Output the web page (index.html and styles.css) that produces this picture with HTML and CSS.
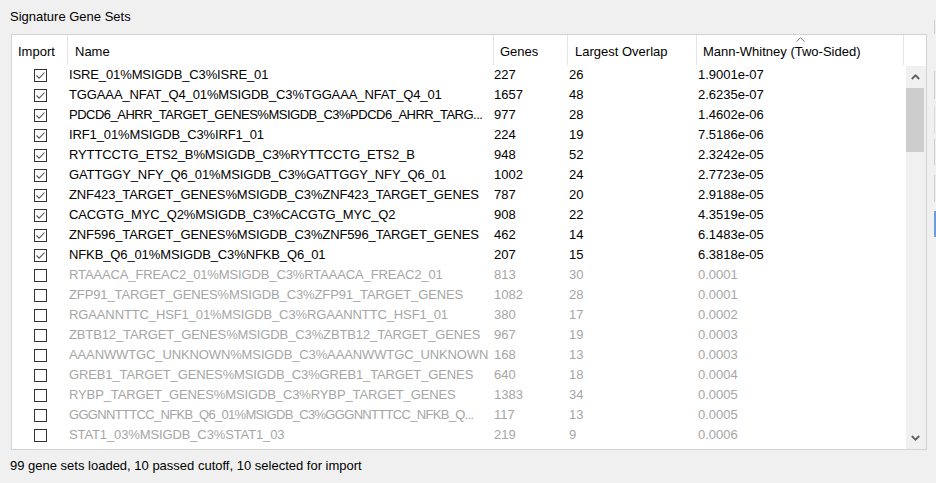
FILE: index.html
```html
<!DOCTYPE html>
<html>
<head>
<meta charset="utf-8">
<title>Signature Gene Sets</title>
<link rel="stylesheet" href="styles.css">
</head>
<body>
<div class="page">
  <div class="left">
    <div class="title">Signature Gene Sets</div>
    <div class="table-box">
      <div class="head">
        <div class="hc c-imp">Import</div>
        <div class="hc c-name">Name</div>
        <div class="hc c-genes">Genes</div>
        <div class="hc c-ov">Largest Overlap</div>
        <div class="hc c-mw">
          <svg class="sort" width="9" height="5" viewBox="0 0 9 5"><path d="M0.5 4.5 L4.5 0.8 L8.5 4.5" fill="none" stroke="#7a7a7a" stroke-width="1"/></svg>
          Mann-Whitney (Two-Sided)
        </div>
        <div class="hc c-fill"></div>
      </div>
      <div class="body">
        <div class="rows">
          <div class="row on"><span class="cb"><svg width="13" height="13" viewBox="0 0 13 13"><rect x="0.5" y="0.5" width="12" height="12" fill="#fff" stroke="#333"/><path d="M2.5 6.5 L5.2 9.2 L10.5 3.5" fill="none" stroke="#555" stroke-width="1.1"/></svg></span><span class="name">ISRE_01%MSIGDB_C3%ISRE_01</span><span class="num">227</span><span class="ov">26</span><span class="mw">1.9001e-07</span></div>
          <div class="row on"><span class="cb"><svg width="13" height="13" viewBox="0 0 13 13"><rect x="0.5" y="0.5" width="12" height="12" fill="#fff" stroke="#333"/><path d="M2.5 6.5 L5.2 9.2 L10.5 3.5" fill="none" stroke="#555" stroke-width="1.1"/></svg></span><span class="name">TGGAAA_NFAT_Q4_01%MSIGDB_C3%TGGAAA_NFAT_Q4_01</span><span class="num">1657</span><span class="ov">48</span><span class="mw">2.6235e-07</span></div>
          <div class="row on"><span class="cb"><svg width="13" height="13" viewBox="0 0 13 13"><rect x="0.5" y="0.5" width="12" height="12" fill="#fff" stroke="#333"/><path d="M2.5 6.5 L5.2 9.2 L10.5 3.5" fill="none" stroke="#555" stroke-width="1.1"/></svg></span><span class="name tight">PDCD6_AHRR_TARGET_GENES%MSIGDB_C3%PDCD6_AHRR_TARG...</span><span class="num">977</span><span class="ov">28</span><span class="mw">1.4602e-06</span></div>
          <div class="row on"><span class="cb"><svg width="13" height="13" viewBox="0 0 13 13"><rect x="0.5" y="0.5" width="12" height="12" fill="#fff" stroke="#333"/><path d="M2.5 6.5 L5.2 9.2 L10.5 3.5" fill="none" stroke="#555" stroke-width="1.1"/></svg></span><span class="name">IRF1_01%MSIGDB_C3%IRF1_01</span><span class="num">224</span><span class="ov">19</span><span class="mw">7.5186e-06</span></div>
          <div class="row on"><span class="cb"><svg width="13" height="13" viewBox="0 0 13 13"><rect x="0.5" y="0.5" width="12" height="12" fill="#fff" stroke="#333"/><path d="M2.5 6.5 L5.2 9.2 L10.5 3.5" fill="none" stroke="#555" stroke-width="1.1"/></svg></span><span class="name">RYTTCCTG_ETS2_B%MSIGDB_C3%RYTTCCTG_ETS2_B</span><span class="num">948</span><span class="ov">52</span><span class="mw">2.3242e-05</span></div>
          <div class="row on"><span class="cb"><svg width="13" height="13" viewBox="0 0 13 13"><rect x="0.5" y="0.5" width="12" height="12" fill="#fff" stroke="#333"/><path d="M2.5 6.5 L5.2 9.2 L10.5 3.5" fill="none" stroke="#555" stroke-width="1.1"/></svg></span><span class="name">GATTGGY_NFY_Q6_01%MSIGDB_C3%GATTGGY_NFY_Q6_01</span><span class="num">1002</span><span class="ov">24</span><span class="mw">2.7723e-05</span></div>
          <div class="row on"><span class="cb"><svg width="13" height="13" viewBox="0 0 13 13"><rect x="0.5" y="0.5" width="12" height="12" fill="#fff" stroke="#333"/><path d="M2.5 6.5 L5.2 9.2 L10.5 3.5" fill="none" stroke="#555" stroke-width="1.1"/></svg></span><span class="name">ZNF423_TARGET_GENES%MSIGDB_C3%ZNF423_TARGET_GENES</span><span class="num">787</span><span class="ov">20</span><span class="mw">2.9188e-05</span></div>
          <div class="row on"><span class="cb"><svg width="13" height="13" viewBox="0 0 13 13"><rect x="0.5" y="0.5" width="12" height="12" fill="#fff" stroke="#333"/><path d="M2.5 6.5 L5.2 9.2 L10.5 3.5" fill="none" stroke="#555" stroke-width="1.1"/></svg></span><span class="name">CACGTG_MYC_Q2%MSIGDB_C3%CACGTG_MYC_Q2</span><span class="num">908</span><span class="ov">22</span><span class="mw">4.3519e-05</span></div>
          <div class="row on"><span class="cb"><svg width="13" height="13" viewBox="0 0 13 13"><rect x="0.5" y="0.5" width="12" height="12" fill="#fff" stroke="#333"/><path d="M2.5 6.5 L5.2 9.2 L10.5 3.5" fill="none" stroke="#555" stroke-width="1.1"/></svg></span><span class="name">ZNF596_TARGET_GENES%MSIGDB_C3%ZNF596_TARGET_GENES</span><span class="num">462</span><span class="ov">14</span><span class="mw">6.1483e-05</span></div>
          <div class="row on"><span class="cb"><svg width="13" height="13" viewBox="0 0 13 13"><rect x="0.5" y="0.5" width="12" height="12" fill="#fff" stroke="#333"/><path d="M2.5 6.5 L5.2 9.2 L10.5 3.5" fill="none" stroke="#555" stroke-width="1.1"/></svg></span><span class="name">NFKB_Q6_01%MSIGDB_C3%NFKB_Q6_01</span><span class="num">207</span><span class="ov">15</span><span class="mw">6.3818e-05</span></div>
          <div class="row off"><span class="cb"><svg width="13" height="13" viewBox="0 0 13 13"><rect x="0.5" y="0.5" width="12" height="12" fill="#fff" stroke="#333"/></svg></span><span class="name">RTAAACA_FREAC2_01%MSIGDB_C3%RTAAACA_FREAC2_01</span><span class="num">813</span><span class="ov">30</span><span class="mw">0.0001</span></div>
          <div class="row off"><span class="cb"><svg width="13" height="13" viewBox="0 0 13 13"><rect x="0.5" y="0.5" width="12" height="12" fill="#fff" stroke="#333"/></svg></span><span class="name">ZFP91_TARGET_GENES%MSIGDB_C3%ZFP91_TARGET_GENES</span><span class="num">1082</span><span class="ov">28</span><span class="mw">0.0001</span></div>
          <div class="row off"><span class="cb"><svg width="13" height="13" viewBox="0 0 13 13"><rect x="0.5" y="0.5" width="12" height="12" fill="#fff" stroke="#333"/></svg></span><span class="name">RGAANNTTC_HSF1_01%MSIGDB_C3%RGAANNTTC_HSF1_01</span><span class="num">380</span><span class="ov">17</span><span class="mw">0.0002</span></div>
          <div class="row off"><span class="cb"><svg width="13" height="13" viewBox="0 0 13 13"><rect x="0.5" y="0.5" width="12" height="12" fill="#fff" stroke="#333"/></svg></span><span class="name">ZBTB12_TARGET_GENES%MSIGDB_C3%ZBTB12_TARGET_GENES</span><span class="num">967</span><span class="ov">19</span><span class="mw">0.0003</span></div>
          <div class="row off"><span class="cb"><svg width="13" height="13" viewBox="0 0 13 13"><rect x="0.5" y="0.5" width="12" height="12" fill="#fff" stroke="#333"/></svg></span><span class="name">AAANWWTGC_UNKNOWN%MSIGDB_C3%AAANWWTGC_UNKNOWN</span><span class="num">168</span><span class="ov">13</span><span class="mw">0.0003</span></div>
          <div class="row off"><span class="cb"><svg width="13" height="13" viewBox="0 0 13 13"><rect x="0.5" y="0.5" width="12" height="12" fill="#fff" stroke="#333"/></svg></span><span class="name">GREB1_TARGET_GENES%MSIGDB_C3%GREB1_TARGET_GENES</span><span class="num">640</span><span class="ov">18</span><span class="mw">0.0004</span></div>
          <div class="row off"><span class="cb"><svg width="13" height="13" viewBox="0 0 13 13"><rect x="0.5" y="0.5" width="12" height="12" fill="#fff" stroke="#333"/></svg></span><span class="name">RYBP_TARGET_GENES%MSIGDB_C3%RYBP_TARGET_GENES</span><span class="num">1383</span><span class="ov">34</span><span class="mw">0.0005</span></div>
          <div class="row off"><span class="cb"><svg width="13" height="13" viewBox="0 0 13 13"><rect x="0.5" y="0.5" width="12" height="12" fill="#fff" stroke="#333"/></svg></span><span class="name tighter">GGGNNTTTCC_NFKB_Q6_01%MSIGDB_C3%GGGNNTTTCC_NFKB_Q...</span><span class="num">117</span><span class="ov">13</span><span class="mw">0.0005</span></div>
          <div class="row off"><span class="cb"><svg width="13" height="13" viewBox="0 0 13 13"><rect x="0.5" y="0.5" width="12" height="12" fill="#fff" stroke="#333"/></svg></span><span class="name">STAT1_03%MSIGDB_C3%STAT1_03</span><span class="num">219</span><span class="ov">9</span><span class="mw">0.0006</span></div>
          <div class="row off"><span class="cb"><svg width="13" height="13" viewBox="0 0 13 13"><rect x="0.5" y="0.5" width="12" height="12" fill="#fff" stroke="#333"/></svg></span><span class="name"></span><span class="num"></span><span class="ov"></span><span class="mw"></span></div>
        </div>
        <div class="scrollbar">
          <div class="sb-btn"><svg width="9" height="6" viewBox="0 0 9 6"><path d="M0.8 5 L4.5 1.3 L8.2 5" fill="none" stroke="#606060" stroke-width="1.8"/></svg></div>
          <div class="sb-thumb"></div>
          <div class="sb-track"></div>
          <div class="sb-btn"><svg width="9" height="6" viewBox="0 0 9 6"><path d="M0.8 1 L4.5 4.7 L8.2 1" fill="none" stroke="#606060" stroke-width="1.8"/></svg></div>
        </div>
      </div>
    </div>
    <div class="status">99 gene sets loaded, 10 passed cutoff, 10 selected for import</div>
  </div>
  <div class="side">
    <div class="seg s1"></div>
    <div class="seg s2"></div>
    <div class="seg s3"></div>
    <div class="seg s4"></div>
    <div class="seg s5"></div>
    <div class="seg s6"></div>
  </div>
</div>
</body>
</html>
```

FILE: styles.css
```css
html, body {
  margin: 0;
  padding: 0;
}
body {
  background: #f0f0f0;
  font-family: "Liberation Sans", Arial, sans-serif;
  font-size: 13px;
  color: #000;
  width: 936px;
  height: 483px;
  overflow: hidden;
}
.page {
  display: flex;
  height: 483px;
}
.left {
  width: 934px;
  display: flex;
  flex-direction: column;
}
.title {
  padding: 9px 0 0 10px;
  height: 16px;
  line-height: 16px;
  margin-bottom: 9px;
  color: #000;
}
.table-box {
  margin-left: 11px;
  width: 916px;
  height: 416px;
  box-sizing: border-box;
  border: 1px solid #d3d3d3;
  background: #fff;
  display: flex;
  flex-direction: column;
}
.head {
  display: flex;
  height: 30px;
  flex: none;
}
.hc {
  box-sizing: border-box;
  border-right: 1px solid #e5e5e5;
  padding: 3px 0 0 6px;
  display: flex;
  align-items: center;
  white-space: nowrap;
  position: relative;
}
.c-imp { width: 56px; }
.c-name { width: 426px; padding-left: 7px; }
.c-genes { width: 74px; }
.c-ov { width: 129px; padding-left: 7px; }
.c-mw { width: 207px; }
.c-fill { flex: 1; border-right: none; }
.sort {
  position: absolute;
  left: 99px;
  top: 2px;
}
.body {
  display: flex;
  flex: 1;
  min-height: 0;
}
.rows {
  width: 894px;
  overflow: hidden;
}
.row {
  display: grid;
  grid-template-columns: 56px 426px 74px 129px 1fr;
  height: 20px;
  line-height: 20px;
  white-space: nowrap;
}
.row span {
  overflow: hidden;
  padding-left: 1px;
}
.row .name {
  letter-spacing: -0.12px;
  padding-right: 2px;
}
.row .name.tight { letter-spacing: -0.5px; }
.row .name.tighter { letter-spacing: -0.68px; }
.row .num { padding-left: 0; }
.row.on { color: #000; }
.row.off { color: #a6a6a6; }
.cb {
  display: flex;
  align-items: center;
  justify-content: center;
  padding-left: 1px;
}
.cb svg { display: block; }
.scrollbar {
  width: 20px;
  background: #f0f0f0;
  display: flex;
  flex-direction: column;
  margin-top: 1px;
}
.sb-btn {
  height: 22px;
  display: flex;
  align-items: center;
  justify-content: center;
  padding-right: 2px;
}
.sb-thumb {
  height: 64px;
  background: #cdcdcd;
  margin-right: 2px;
}
.sb-track { flex: 1; }
.status {
  padding: 8px 0 0 10px;
  line-height: 16px;
}
.side {
  width: 2px;
  display: flex;
  flex-direction: column;
}
.seg { width: 1px; background: #cfcfcf; }
.s1 { margin-top: 20px; height: 14px; }
.s2 { margin-top: 37px; height: 28px; }
.s3 { margin-top: 7px; height: 27px; background: #dcdcdc; }
.s4 { margin-top: 6px; height: 26px; }
.s5 { margin-top: 10px; height: 27px; }
.s6 { margin-top: 9px; height: 26px; background: #6a9fd8; width: 2px; }
```
